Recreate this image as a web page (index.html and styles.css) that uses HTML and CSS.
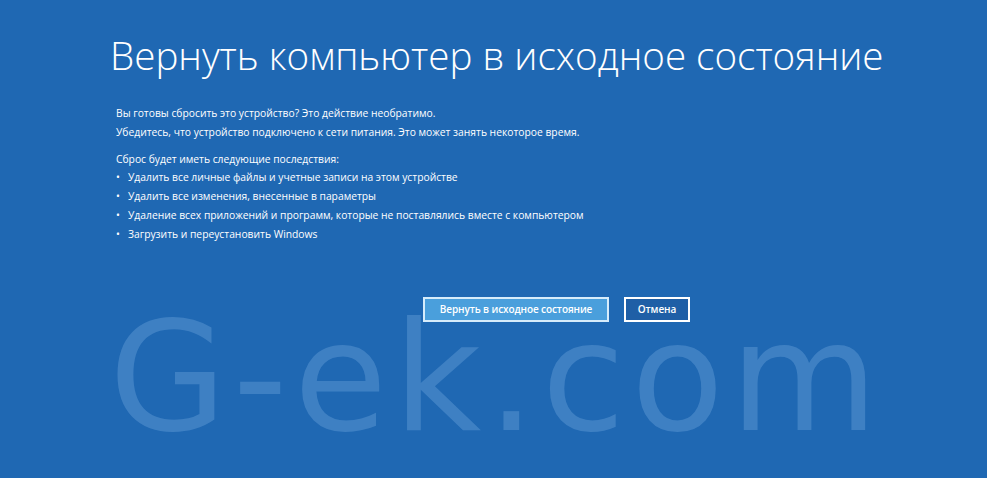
FILE: index.html
```html
<!DOCTYPE html>
<html lang="ru">
<head>
<meta charset="utf-8">
<link rel="stylesheet" href="styles.css">
</head>
<body>
<div class="screen">
  <h1 class="title">Вернуть компьютер в исходное состояние</h1>
  <div class="content">
    <p class="line">Вы готовы сбросить это устройство? Это действие необратимо.</p>
    <p class="line">Убедитесь, что устройство подключено к сети питания. Это может занять некоторое время.</p>
    <p class="line gap">Сброс будет иметь следующие последствия:</p>
    <ul class="list">
      <li>Удалить все личные файлы и учетные записи на этом устройстве</li>
      <li>Удалить все изменения, внесенные в параметры</li>
      <li>Удаление всех приложений и программ, которые не поставлялись вместе с компьютером</li>
      <li>Загрузить и переустановить Windows</li>
    </ul>
  </div>
  <div class="actions">
    <button class="btn primary">Вернуть в исходное состояние</button>
    <button class="btn secondary">Отмена</button>
  </div>
  <div class="watermark">G-ek.com</div>
</div>
</body>
</html>
```
FILE: styles.css
```css
html, body {
  margin: 0;
  padding: 0;
  width: 987px;
  height: 478px;
  overflow: hidden;
  background: #1f68b3;
}
.screen {
  position: relative;
  width: 987px;
  height: 478px;
  box-sizing: border-box;
  padding: 29px 0 0 110px;
  color: #ffffff;
  font-family: "Open Sans", "Noto Sans", sans-serif;
}
.title {
  margin: 0;
  font-weight: 300;
  font-size: 38.6px;
  line-height: 52px;
}
.content {
  padding-left: 6px;
  margin-top: 23px;
  font-size: 10.3px;
}
.line {
  margin: 0;
  line-height: 18.6px;
}
.line.gap {
  margin-top: 8.5px;
}
.list {
  list-style: none;
  margin: 0;
  padding: 0;
}
.list li {
  position: relative;
  padding-left: 12px;
  line-height: 18.9px;
}
.list li::before {
  content: "•";
  position: absolute;
  left: 0;
  top: 0;
}
.actions {
  display: flex;
  gap: 15px;
  margin-top: 53px;
  padding-left: 313px;
}
.btn {
  height: 25px;
  box-sizing: border-box;
  border: 2px solid #ffffff;
  background: #1f5fa6;
  color: #ffffff;
  font-family: "Open Sans", "Noto Sans", sans-serif;
  font-size: 10px;
  font-weight: 600;
  letter-spacing: -0.1px;
  white-space: nowrap;
  padding: 0;
  margin: 0;
}
.btn.primary {
  background: #4a9fdc;
  border-color: #d6ecfb;
  width: 186px;
}
.btn.secondary {
  width: 66px;
}
.watermark {
  position: absolute;
  left: 109px;
  top: 322px;
  font-family: "DejaVu Sans", sans-serif;
  font-size: 152px;
  line-height: 112px;
  letter-spacing: 6px;
  color: rgba(110, 165, 220, 0.4);
  pointer-events: none;
}
```
